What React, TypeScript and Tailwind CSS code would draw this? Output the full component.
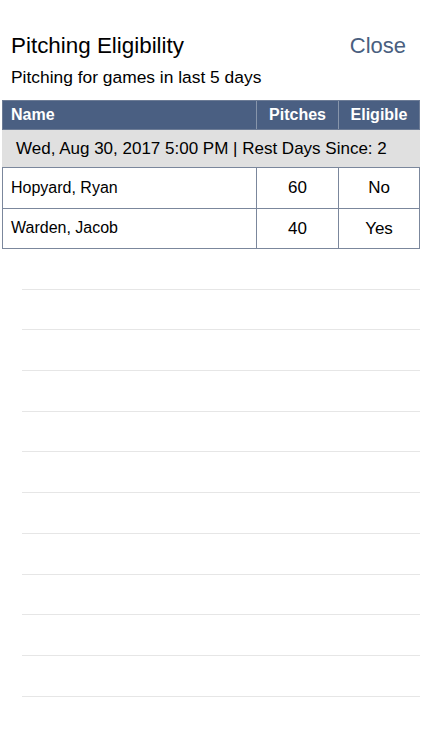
import React from "react";

const rows = [
  { name: "Hopyard, Ryan", pitches: "60", eligible: "No" },
  { name: "Warden, Jacob", pitches: "40", eligible: "Yes" },
];

export default function App() {
  const font = { fontFamily: '"Liberation Sans", Arial, sans-serif' };
  return (
    <div className="w-[422px] h-[750px] bg-white overflow-hidden text-black" style={font}>
      <div className="flex items-baseline justify-between pt-[33px] pl-[11px] pr-[16px]">
        <div className="text-[22.4px] leading-[26px]">Pitching Eligibility</div>
        <div className="text-[22px] leading-[26px] text-[#4a5f80]">Close</div>
      </div>
      <div className="mt-[8px] pl-[11px] text-[17.4px] leading-[20px]">Pitching for games in last 5 days</div>

      <div className="mt-[13px] ml-[2px] w-[418px]">
        <div className="flex h-[30px] bg-[#4a5f82] text-white font-bold text-[16px] border border-[#6d7c96]">
          <div className="flex-1 flex items-center pl-[8px]">Name</div>
          <div className="w-[82px] flex items-center justify-center border-l border-[#8795ab]">Pitches</div>
          <div className="w-[81px] flex items-center justify-center border-l border-[#8795ab]">Eligible</div>
        </div>
        <div className="h-[37px] bg-[#e0e0e0] flex items-center pl-[14px] text-[17px]">
          Wed, Aug 30, 2017 5:00 PM | Rest Days Since: 2
        </div>
        <div className="border-l border-r border-[#7b879c]">
          {rows.map((r) => (
            <div key={r.name} className="flex h-[40.5px] border-t border-[#7b879c] text-[16px]">
              <div className="flex-1 flex items-center pl-[8px]">{r.name}</div>
              <div className="w-[82px] flex items-center justify-center border-l border-[#7b879c] text-[17px]">{r.pitches}</div>
              <div className="w-[81px] flex items-center justify-center border-l border-[#7b879c] text-[17px]">{r.eligible}</div>
            </div>
          ))}
          <div className="border-t border-[#7b879c]" />
        </div>
      </div>

      <div className="pl-[22px] pr-[2px]">
        {Array.from({ length: 11 }).map((_, i) => (
          <div key={i} className="h-[40.7px] border-b border-[#e6e6e6]" />
        ))}
      </div>
    </div>
  );
}
